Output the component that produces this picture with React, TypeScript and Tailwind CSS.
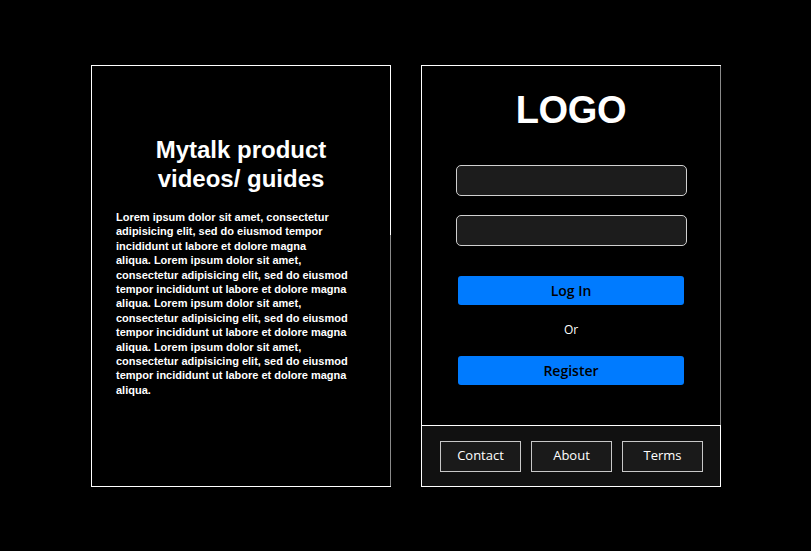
import React from "react";

const lines = [
  "Lorem ipsum dolor sit amet, consectetur",
  "adipisicing elit, sed do eiusmod tempor",
  "incididunt ut labore et dolore magna",
  "aliqua. Lorem ipsum dolor sit amet,",
  "consectetur adipisicing elit, sed do eiusmod",
  "tempor incididunt ut labore et dolore magna",
  "aliqua. Lorem ipsum dolor sit amet,",
  "consectetur adipisicing elit, sed do eiusmod",
  "tempor incididunt ut labore et dolore magna",
  "aliqua. Lorem ipsum dolor sit amet,",
  "consectetur adipisicing elit, sed do eiusmod",
  "tempor incididunt ut labore et dolore magna",
  "aliqua.",
];

export default function App() {
  return (
    <div
      className="w-[811px] h-[551px] bg-black flex flex-row items-start pt-[65px] pl-[91px] gap-[30px]"
      style={{ fontFamily: '"Liberation Sans", Arial, sans-serif' }}
    >
      {/* Left panel */}
      <div className="w-[300px] h-[422px] flex flex-row border-l border-t border-b border-white">
        <div className="flex-1 flex flex-col items-center pt-[69px]">
          <h1 className="text-white font-bold text-[24px] leading-[29px] text-center">
            Mytalk product
            <br />
            videos/ guides
          </h1>
          <p className="self-start ml-[24px] mt-[17px] text-white font-bold text-[11px] leading-[14.4px] whitespace-nowrap">
            {lines.map((l, i) => (
              <span key={i} className="block">
                {l}
              </span>
            ))}
          </p>
        </div>
        <div className="w-px flex flex-col">
          <div className="h-[169px] bg-white" />
          <div className="flex-1 bg-[#8a8a8a]" />
        </div>
      </div>

      {/* Right panel */}
      <div className="w-[300px] h-[422px] flex flex-col">
        <div className="flex-1 flex flex-row border-l border-t border-white">
          <div className="flex-1 flex flex-col items-center">
            <div className="mt-[21px] text-white font-bold text-[38px] leading-[46px] tracking-[-0.3px]">
              LOGO
            </div>
            <div className="mt-[32px] w-[231px] h-[31px] rounded-[5px] bg-[#1c1c1c] border border-[#d0d0d0]" />
            <div className="mt-[19px] w-[231px] h-[31px] rounded-[5px] bg-[#1c1c1c] border border-[#d0d0d0]" />
            <button
              className="mt-[30px] w-[226px] h-[29px] rounded-[3px] bg-[#007bff] text-black text-[14px] font-semibold"
              style={{ fontFamily: '"Open Sans", sans-serif' }}
            >
              Log In
            </button>
            <div
              className="mt-[17px] text-white text-[12px] leading-[16px]"
              style={{ fontFamily: '"Open Sans", sans-serif' }}
            >
              Or
            </div>
            <button
              className="mt-[18px] w-[226px] h-[29px] rounded-[3px] bg-[#007bff] text-black text-[14px] font-semibold"
              style={{ fontFamily: '"Open Sans", sans-serif' }}
            >
              Register
            </button>
          </div>
          <div className="w-px bg-[#8a8a8a]" />
        </div>
        <div
          className="h-[62px] bg-[#111111] border border-white flex flex-row items-center pl-[18px] gap-[10px]"
          style={{ fontFamily: '"Open Sans", sans-serif' }}
        >
          {["Contact", "About", "Terms"].map((t) => (
            <div
              key={t}
              className="w-[81px] h-[31px] bg-[#1a1a1a] border border-[#c8c8c8] text-white text-[13px] flex items-center justify-center"
            >
              {t}
            </div>
          ))}
        </div>
      </div>
    </div>
  );
}
